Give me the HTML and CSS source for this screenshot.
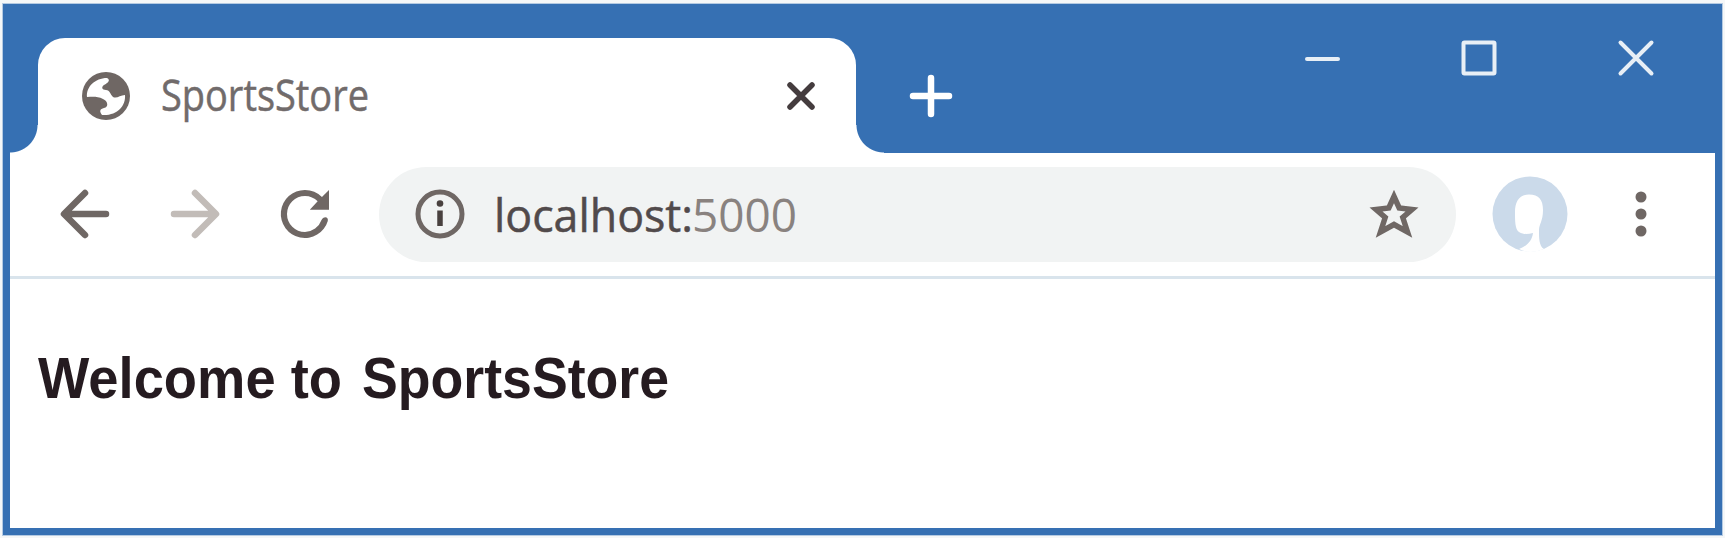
FILE: index.html
```html
<!DOCTYPE html>
<html lang="en">
<head>
<meta charset="utf-8">
<title>SportsStore</title>
<link rel="stylesheet" href="styles.css">
</head>
<body>
<div class="window">
  <header class="titlebar">
    <div class="tab">
      <svg class="globe" viewBox="0 0 48 48"><circle cx="24" cy="24" r="24" fill="#6f6764"/><path fill="#fff" d="M5 25C4 15 13 6 25 6C29 8 26 11 22 13C19 15 20 18 24 18C28 18 28 22 31 25C35 27 38 23 43 23C44 34 35 44 20 43C17 39 18 37 22 36C27 35 26 29 21 27C15 24 10 25 5 25Z"/></svg>
      <svg class="tab-title" viewBox="0 0 208 60"><text x="0" y="43" textLength="208" lengthAdjust="spacingAndGlyphs">SportsStore</text></svg>
      <svg class="tab-close" viewBox="0 0 30 30"><path d="M4 4L26 26M26 4L4 26"/></svg>
    </div>
    <svg class="new-tab" viewBox="0 0 42 42"><path d="M21 3V39M3 21H39"/></svg>
    <div class="controls">
      <svg viewBox="0 0 36 36"><path d="M3 19H34"/></svg>
      <svg viewBox="0 0 36 36"><rect x="2.500" y="2.500" width="31" height="31" rx="1"/></svg>
      <svg viewBox="0 0 36 36"><path d="M2.500 2.500L33.500 33.500M33.500 2.500L2.500 33.500"/></svg>
    </div>
  </header>
  <nav class="toolbar">
    <svg class="nav-icon" viewBox="0 0 72 72"><path d="M57 36H17M36 15L15 36L36 57"/></svg>
    <svg class="nav-icon disabled" viewBox="0 0 72 72"><path d="M15 36H55M36 15L57 36L36 57"/></svg>
    <svg class="nav-icon" viewBox="0 0 24 24"><path class="solid" d="M17.650 6.350A7.958 7.958 0 0 0 12 4a8 8 0 1 0 7.600 10.300q.2-1.100-.9-1.200q-.8 0-1.200.9A5.990 5.990 0 0 1 12 18a6 6 0 1 1 0-12c1.660 0 3.140.690 4.220 1.780L13.600 10.600H20V4z"/></svg>
    <div class="omnibox">
      <svg class="info" viewBox="0 0 50 50"><circle cx="25" cy="25" r="22" fill="none" stroke="#6f6764" stroke-width="5"/><circle cx="25" cy="14.500" r="3.300" fill="#49413f"/><path d="M25 21.500V37" stroke="#49413f" stroke-width="5.500"/></svg>
      <svg class="url" viewBox="0 0 300 60"><text x="-2" y="42" textLength="199" lengthAdjust="spacingAndGlyphs">localhost:</text><text class="port" x="196" y="42" textLength="105" lengthAdjust="spacingAndGlyphs">5000</text></svg>
      <svg class="star" viewBox="0 0 50 50"><path d="M25 7.500L30.200 19L43 20.500L33.800 28.500L38.500 43L25 35.500L11.500 43L16.200 28.500L7 20.500L19.800 19Z"/></svg>
    </div>
    <svg class="avatar" viewBox="0 0 76 76"><circle cx="38" cy="38" r="37.500" fill="#cbdaea"/><path fill="#fff" d="M37 18.500C27 18.500 23 26 23 36C23 45 23 53 27 56C32 59 36 58 41 57C40 65 35 70 27 73Q38 79 52 73C47 70 47 62 47 54C47 48 51 45 51 34C51 24 47 18.500 37 18.500Z"/></svg>
    <svg class="menu" viewBox="0 0 12 48"><circle cx="6" cy="7" r="5.500"/><circle cx="6" cy="24" r="5.500"/><circle cx="6" cy="41" r="5.500"/></svg>
  </nav>
  <main class="page">
    <svg class="heading" viewBox="0 0 632 70" role="heading"><text x="0" y="50" textLength="304" lengthAdjust="spacingAndGlyphs">Welcome to</text><text x="324" y="50" textLength="307" lengthAdjust="spacingAndGlyphs">SportsStore</text></svg>
  </main>
</div>
</body>
</html>
```
FILE: styles.css
```css
* { box-sizing: border-box; }
body { margin: 0; padding: 4px 3px 3px; background: #f5f7f8; }
svg { display: block; flex: none; overflow: visible; }
.window {
  width: 1719px; height: 531px;
  display: flex; flex-direction: column;
  border: 7px solid #3670b3; border-top: 0;
  background: #fff;
  outline: 1px solid #b4cae2;
}
.titlebar {
  height: 149px; flex: none; display: flex;
  padding: 34px 60px 0 28px;
  background: #3670b3;
}
.tab {
  position: relative;
  width: 818px; height: 115px;
  display: flex; align-items: center;
  padding: 0 40px 0 44px;
  border-radius: 27px 27px 0 0;
  background: #fff;
}
.tab::before, .tab::after {
  content: ""; position: absolute; bottom: 0;
  width: 28px; height: 28px;
}
.tab::before { left: -28px; background: radial-gradient(circle at 0 0, #3670b3 27px, #fff 28px); }
.tab::after { right: -28px; background: radial-gradient(circle at 100% 0, #3670b3 27px, #fff 28px); }
.globe { width: 48px; height: 48px; }
.tab-title { width: 208px; height: 60px; margin: 4px 0 0 31px; }
.tab-title text { font: 43px "Open Sans", sans-serif; fill: #716b6b; stroke: #716b6b; stroke-width: .5; }
.tab-close { width: 30px; height: 30px; margin-left: auto; stroke: #443c3e; stroke-width: 5.5; stroke-linecap: round; }
.new-tab { width: 42px; height: 42px; margin: 37px 0 0 54px; stroke: #fff; stroke-width: 6.5; stroke-linecap: round; }
.controls { display: flex; gap: 121px; margin: 2px 1px 0 auto; }
.controls svg { width: 36px; height: 36px; fill: none; stroke: #e8eff6; stroke-width: 4; stroke-linecap: round; }
.toolbar {
  height: 126px; flex: none; display: flex; align-items: center;
  padding: 0 0 1px 39px;
  border-bottom: 3px solid #d9e4ec;
}
.nav-icon { width: 72px; height: 72px; margin-right: 38px; fill: none; stroke: #6f6764; stroke-width: 6.5; stroke-linecap: round; stroke-linejoin: round; }
.nav-icon.disabled { stroke: #c2bcb8; }
.nav-icon .solid { fill: #6f6764; stroke: none; }
.omnibox {
  width: 1077px; height: 95px;
  display: flex; align-items: center;
  padding: 0 37px 0 36px;
  border-radius: 48px;
  background: #f1f3f3;
}
.info { width: 50px; height: 50px; }
.url { width: 300px; height: 60px; margin: 12px 0 0 31px; }
.url text { font: 46px "Open Sans", sans-serif; fill: #514a4b; stroke: #514a4b; stroke-width: .5; }
.url .port { fill: #89827f; stroke: none; }
.star { width: 50px; height: 50px; margin-left: auto; fill: none; stroke: #6f6764; stroke-width: 5.5; }
.avatar { width: 76px; height: 76px; margin-left: 36px; }
.menu { width: 12px; height: 48px; margin-left: 67px; fill: #6f6764; }
.page { flex: 1; padding: 69px 28px 0; }
.heading { width: 632px; height: 70px; }
.heading text { font: bold 57px "Liberation Sans", Arial, sans-serif; fill: #251b20; }
```
